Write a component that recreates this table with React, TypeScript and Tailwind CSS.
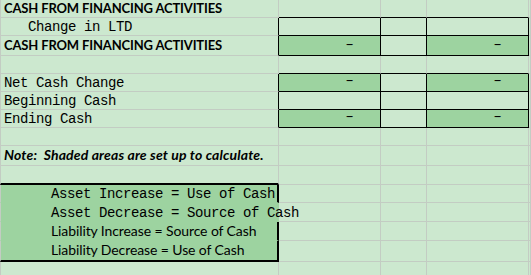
import React from "react";

const mono = "font-['Liberation_Mono',monospace] text-[14px] tracking-[-0.4px] leading-[15px] whitespace-pre";
const sans = "font-['Lato',sans-serif] text-[14px] leading-[16px] whitespace-pre";
const head = "font-['Lato',sans-serif] text-[13px] tracking-[-0.15px] leading-[16px] font-bold whitespace-pre";

function Cell({ w, cls = "", children }: { w: string; cls?: string; children?: React.ReactNode }) {
  return <div className={`${w} shrink-0 h-full box-border flex items-end whitespace-nowrap ${cls}`}>{children}</div>;
}

const G = "border-r border-b border-[#c3ccc3]";
const WA = "w-[279px] border-l border-l-[#c3ccc3]";
const WB = "w-[102px]";
const WC = "w-[46px]";
const WD = "w-[102px]";
const WE = "flex-1";
const SH = "bg-[#9dd3a0]";

function Dash() {
  return <div className="w-full flex justify-end pr-[26px] pb-[5px] font-['Lato',sans-serif] text-[15px] leading-[14px] text-black">–</div>;
}

export default function App() {
  return (
    <div className="w-[531px] h-[275px] overflow-hidden bg-[#cce8cf] text-black flex flex-col">
      {/* row 0 */}
      <div className="h-[18px] flex shrink-0">
        <Cell w={WA} cls={G}><span className={`${head} pl-[3px] pb-[1px]`}>CASH FROM FINANCING ACTIVITIES</span></Cell>
        <Cell w={WB} cls={`${G} border-b-black`} />
        <Cell w={WC} cls={`${G} border-b-black`} />
        <Cell w={WD} cls={`${G} border-b-black`} />
        <Cell w={WE} cls={G} />
      </div>
      {/* row 1 */}
      <div className="h-[18px] flex shrink-0">
        <Cell w={WA} cls={`${G} border-r-black`}><span className={`${mono} pl-[3px]`}>{"   Change in LTD"}</span></Cell>
        <Cell w={WB} cls={`${G} border-r-black border-b-black`} />
        <Cell w={WC} cls={`${G} border-r-black border-b-black`} />
        <Cell w={WD} cls={`${G} border-r-black border-b-black`} />
        <Cell w={WE} cls={G} />
      </div>
      {/* row 2 */}
      <div className="h-[20px] flex shrink-0">
        <Cell w={WA} cls={`${G} border-r-black`}><span className={`${head} pl-[3px] pb-[2px]`}>CASH FROM FINANCING ACTIVITIES</span></Cell>
        <Cell w={WB} cls={`${G} border-r-black border-b-black ${SH}`}><Dash /></Cell>
        <Cell w={WC} cls={`${G} border-r-black border-b-black`} />
        <Cell w={WD} cls={`${G} border-r-black border-b-black ${SH}`}><Dash /></Cell>
        <Cell w={WE} cls={G} />
      </div>
      {/* row 3 */}
      <div className="h-[18px] flex shrink-0">
        <Cell w={WA} cls={G} />
        <Cell w={WB} cls={`${G} border-b-black`} />
        <Cell w={WC} cls={`${G} border-b-black`} />
        <Cell w={WD} cls={`${G} border-b-black`} />
        <Cell w={WE} cls={G} />
      </div>
      {/* row 4 */}
      <div className="h-[18px] flex shrink-0">
        <Cell w={WA} cls={`${G} border-r-black`}><span className={`${mono} pl-[3px]`}>Net Cash Change</span></Cell>
        <Cell w={WB} cls={`${G} border-r-black border-b-black ${SH}`}><Dash /></Cell>
        <Cell w={WC} cls={`${G} border-r-black border-b-black`} />
        <Cell w={WD} cls={`${G} border-r-black border-b-black ${SH}`}><Dash /></Cell>
        <Cell w={WE} cls={G} />
      </div>
      {/* row 5 */}
      <div className="h-[18px] flex shrink-0">
        <Cell w={WA} cls={`${G} border-r-black`}><span className={`${mono} pl-[3px]`}>Beginning Cash</span></Cell>
        <Cell w={WB} cls={`${G} border-r-black border-b-black`} />
        <Cell w={WC} cls={`${G} border-r-black border-b-black`} />
        <Cell w={WD} cls={`${G} border-r-black border-b-black`} />
        <Cell w={WE} cls={G} />
      </div>
      {/* row 6 */}
      <div className="h-[18px] flex shrink-0">
        <Cell w={WA} cls={`${G} border-r-black`}><span className={`${mono} pl-[3px]`}>Ending Cash</span></Cell>
        <Cell w={WB} cls={`${G} border-r-black border-b-black ${SH}`}><Dash /></Cell>
        <Cell w={WC} cls={`${G} border-r-black border-b-black`} />
        <Cell w={WD} cls={`${G} border-r-black border-b-black ${SH}`}><Dash /></Cell>
        <Cell w={WE} cls={G} />
      </div>
      {/* row 7 */}
      <div className="h-[18px] flex shrink-0">
        <Cell w={WA} cls={G} />
        <Cell w={WB} cls={G} />
        <Cell w={WC} cls={G} />
        <Cell w={WD} cls={G} />
        <Cell w={WE} cls={G} />
      </div>
      {/* row 8 */}
      <div className="h-[20px] flex shrink-0">
        <Cell w={WA} cls={G}><span className={`${sans} font-bold italic tracking-[0.15px] pl-[3px] pb-[2px]`}>{"Note:  Shaded areas are set up to calculate."}</span></Cell>
        <Cell w={WB} cls={G} />
        <Cell w={WC} cls={G} />
        <Cell w={WD} cls={G} />
        <Cell w={WE} cls={G} />
      </div>
      {/* row 9 */}
      <div className="h-[19px] flex shrink-0">
        <Cell w={WA} cls={`${G} border-b-2 border-b-black`} />
        <Cell w={WB} cls={G} />
        <Cell w={WC} cls={G} />
        <Cell w={WD} cls={G} />
        <Cell w={WE} cls={G} />
      </div>
      {/* row 10 */}
      <div className="h-[18px] flex shrink-0">
        <Cell w={WA} cls={`border-r-2 border-b border-r-black border-b-[#9dd3a0] border-l border-l-[#9dd3a0] ${SH}`}><span className={`${mono} pl-[50px]`}>Asset Increase = Use of Cash</span></Cell>
        <Cell w={WB} cls={G} />
        <Cell w={WC} cls={G} />
        <Cell w={WD} cls={G} />
        <Cell w={WE} cls={G} />
      </div>
      {/* row 11 */}
      <div className="h-[19px] flex shrink-0">
        <Cell w={WA} cls={`border-r-2 border-b border-r-[#9dd3a0] border-b-[#9dd3a0] border-l border-l-[#9dd3a0] ${SH}`}><span className={`${mono} pl-[50px] relative z-10`}>Asset Decrease = Source of Cash</span></Cell>
        <Cell w={WB} cls={G} />
        <Cell w={WC} cls={G} />
        <Cell w={WD} cls={G} />
        <Cell w={WE} cls={G} />
      </div>
      {/* row 12 */}
      <div className="h-[19px] flex shrink-0">
        <Cell w={WA} cls={`border-r-2 border-b border-r-black border-b-[#9dd3a0] border-l border-l-[#9dd3a0] ${SH}`}><span className={`${sans} tracking-[-0.1px] pl-[50px] pb-[1px]`}>Liability Increase = Source of Cash</span></Cell>
        <Cell w={WB} cls={G} />
        <Cell w={WC} cls={G} />
        <Cell w={WD} cls={G} />
        <Cell w={WE} cls={G} />
      </div>
      {/* row 13 */}
      <div className="h-[21px] flex shrink-0">
        <Cell w={WA} cls={`border-r-2 border-b-2 border-r-black border-b-black border-l border-l-[#9dd3a0] ${SH}`}><span className={`${sans} tracking-[-0.1px] pl-[50px] pb-[2px]`}>Liability Decrease = Use of Cash</span></Cell>
        <Cell w={WB} cls={G} />
        <Cell w={WC} cls={G} />
        <Cell w={WD} cls={G} />
        <Cell w={WE} cls={G} />
      </div>
      {/* row 14 */}
      <div className="h-[19px] flex shrink-0">
        <Cell w={WA} cls={G} />
        <Cell w={WB} cls={G} />
        <Cell w={WC} cls={G} />
        <Cell w={WD} cls={G} />
        <Cell w={WE} cls={G} />
      </div>
    </div>
  );
}
